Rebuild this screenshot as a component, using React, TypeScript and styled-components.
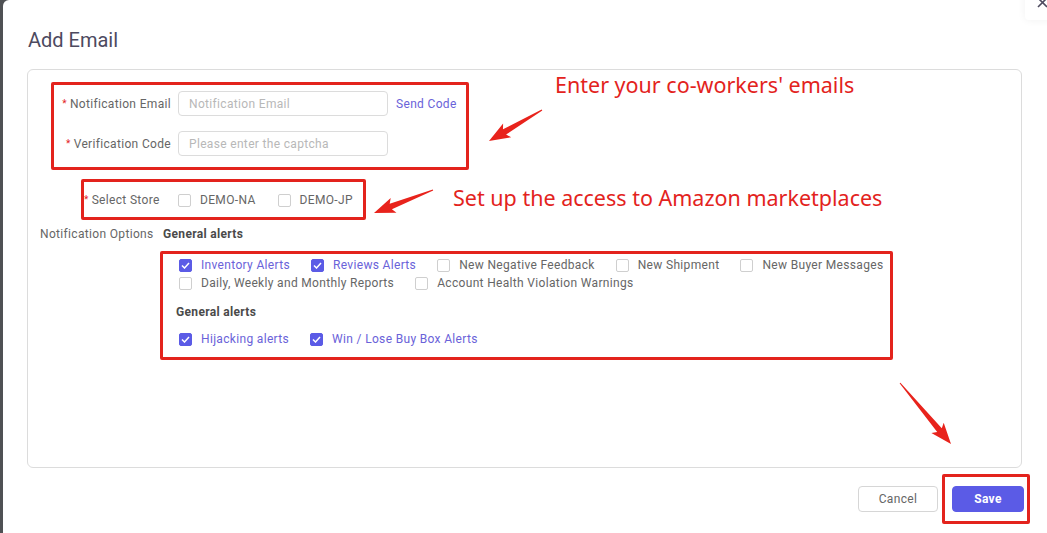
import React, { FC } from "react";
import styled, { createGlobalStyle } from "styled-components";

const GlobalStyle = createGlobalStyle`
  html, body {
    margin: 0;
    padding: 0;
    background: #fff;
  }
  body {
    font-family: Roboto, "Liberation Sans", Arial, sans-serif;
    font-size: 12px;
    letter-spacing: 0.33px;
    color: #666;
  }
`;

const Page = styled.div`
  position: relative;
  display: flex;
  width: 1047px;
  height: 533px;
  overflow: hidden;
  background: #4f5154;
`;

const Backdrop = styled.div`
  width: 3px;
  flex-shrink: 0;
`;

const Modal = styled.div`
  flex: 1;
  background: #fff;
  border-top-left-radius: 6px;
  padding: 28px 25px 0 24px;
  display: flex;
  flex-direction: column;
`;

const Title = styled.h2`
  margin: 0 0 0 1px;
  font-size: 20px;
  line-height: 24px;
  font-weight: 400;
  letter-spacing: 0;
  color: #4d4a5f;
`;

const Body = styled.div`
  margin-top: 17px;
  height: 399px;
  box-sizing: border-box;
  border: 1px solid #dcdcdc;
  border-radius: 6px;
  padding-top: 12px;
`;

const Highlight = styled.div<{ $left?: number; $top?: number; $width?: number; $pad?: string }>`
  box-sizing: border-box;
  border: 3px solid #e3231d;
  border-radius: 2px;
  margin-left: ${(p) => p.$left ?? 0}px;
  margin-top: ${(p) => p.$top ?? 0}px;
  width: ${(p) => (p.$width ? `${p.$width}px` : "auto")};
  padding: ${(p) => p.$pad ?? "0"};
`;

const FormRow = styled.div`
  display: flex;
  align-items: center;
  height: 25px;
  & + & {
    margin-top: 15px;
  }
`;

const Label = styled.label<{ $width: number; $align?: string; $after?: number }>`
  width: ${(p) => p.$width}px;
  flex-shrink: 0;
  text-align: ${(p) => p.$align ?? "right"};
  margin-right: ${(p) => p.$after ?? 0}px;
  color: #666;
  line-height: 18px;
  white-space: nowrap;
`;

const Star = styled.span`
  color: #e3231d;
  font-size: 10px;
  margin-right: 3px;
  vertical-align: 1px;
`;

const Input = styled.input`
  box-sizing: border-box;
  width: 210px;
  height: 25px;
  margin-left: 7px;
  padding: 0 10px;
  border: 1px solid #dcdcdc;
  border-radius: 4px;
  font-family: inherit;
  font-size: 12px;
  letter-spacing: 0.33px;
  color: #555;
  outline: none;
  &::placeholder {
    color: #b8b8b8;
  }
`;

const LinkButton = styled.span`
  margin-left: 8px;
  color: #6a62d9;
`;

const CheckRow = styled.div<{ $width?: number; $top?: number }>`
  display: flex;
  flex-wrap: wrap;
  align-items: center;
  width: ${(p) => (p.$width ? `${p.$width}px` : "auto")};
  margin-top: ${(p) => p.$top ?? 0}px;
`;

const CheckItem = styled.label<{ $gap?: number }>`
  display: inline-flex;
  align-items: center;
  height: 18px;
  margin-right: ${(p) => p.$gap ?? 21}px;
  white-space: nowrap;
`;

const Box = styled.span<{ $checked: boolean }>`
  box-sizing: border-box;
  width: 13px;
  height: 13px;
  border-radius: 2px;
  border: 1px solid ${(p) => (p.$checked ? "#5b5be6" : "#cfcfcf")};
  background: ${(p) => (p.$checked ? "#5b5be6" : "#fff")};
  display: inline-flex;
  align-items: center;
  justify-content: center;
  margin-right: 9px;
`;

const CheckText = styled.span<{ $checked: boolean }>`
  color: ${(p) => (p.$checked ? "#6a62d9" : "#666")};
  line-height: 18px;
`;

const OptionsRow = styled.div`
  display: flex;
  align-items: center;
  height: 18px;
  margin-top: 5px;
  padding-left: 12px;
`;

const SectionTitle = styled.span<{ $indent?: number; $top?: number }>`
  display: block;
  font-weight: 700;
  color: #4a4a4a;
  line-height: 18px;
  margin-left: ${(p) => p.$indent ?? 0}px;
  margin-top: ${(p) => p.$top ?? 0}px;
`;

const Footer = styled.div`
  display: flex;
  justify-content: flex-end;
  align-items: center;
  margin-top: 6px;
  margin-right: -8px;
`;

const Button = styled.button<{ $primary?: boolean }>`
  box-sizing: border-box;
  height: 26px;
  border-radius: 4px;
  font-family: inherit;
  font-size: 12px;
  letter-spacing: 0.33px;
  border: 1px solid ${(p) => (p.$primary ? "#5b5be6" : "#d6d6d6")};
  background: ${(p) => (p.$primary ? "#5b5be6" : "#fff")};
  color: ${(p) => (p.$primary ? "#fff" : "#666")};
  font-weight: ${(p) => (p.$primary ? 700 : 400)};
  width: ${(p) => (p.$primary ? 72 : 80)}px;
  cursor: pointer;
`;

const CloseBtn = styled.div`
  position: absolute;
  top: -12px;
  right: -10px;
  width: 32px;
  height: 32px;
  background: #fff;
  border-radius: 4px;
  box-shadow: 0 0 8px rgba(0, 0, 0, 0.06);
  box-sizing: border-box;
  padding: 9px 0 0 12px;
  color: #4d4a5f;
`;

const Note = styled.div<{ $x: number; $y: number }>`
  position: absolute;
  left: ${(p) => p.$x}px;
  top: ${(p) => p.$y}px;
  font-family: "Noto Sans", "Open Sans", sans-serif;
  font-size: 21.5px;
  line-height: 28px;
  letter-spacing: 0;
  color: #e3231d;
  white-space: nowrap;
`;

const Arrows = styled.svg`
  position: absolute;
  left: 0;
  top: 0;
  pointer-events: none;
`;

const Tick = () => (
  <svg width="9" height="7" viewBox="0 0 9 7">
    <path d="M1 3.5 L3.5 6 L8 1" fill="none" stroke="#fff" strokeWidth="1.5" />
  </svg>
);

const CloseIcon = () => (
  <svg width="11" height="11" viewBox="0 0 11 11">
    <path d="M1 1 L10 10 M10 1 L1 10" stroke="currentColor" strokeWidth="1.6" />
  </svg>
);

interface CheckProps {
  label: string;
  checked?: boolean;
  gap?: number;
}

const Check: FC<CheckProps> = ({ label, checked = false, gap }) => (
  <CheckItem $gap={gap}>
    <Box $checked={checked}>{checked && <Tick />}</Box>
    <CheckText $checked={checked}>{label}</CheckText>
  </CheckItem>
);

// tapered arrow from tail to tip
const arrow = (x1: number, y1: number, x2: number, y2: number) => {
  const dx = x2 - x1;
  const dy = y2 - y1;
  const len = Math.hypot(dx, dy);
  const ux = dx / len;
  const uy = dy / len;
  const nx = -uy;
  const ny = ux;
  const headLen = 18;
  const bx = x2 - ux * headLen;
  const by = y2 - uy * headLen;
  const pts = [
    [x1 + nx * 0.5, y1 + ny * 0.5],
    [bx + nx * 3, by + ny * 3],
    [bx - ux * 3 + nx * 8, by - uy * 3 + ny * 8],
    [x2, y2],
    [bx - ux * 3 - nx * 8, by - uy * 3 - ny * 8],
    [bx - nx * 3, by - ny * 3],
    [x1 - nx * 0.5, y1 - ny * 0.5],
  ];
  return pts.map((p) => `${p[0].toFixed(1)},${p[1].toFixed(1)}`).join(" ");
};

const App: FC = () => {
  return (
    <>
      <GlobalStyle />
      <Page>
        <Backdrop />
        <Modal>
          <Title>Add Email</Title>
          <Body>
            <Highlight $left={23} $width={418} $pad="6px 0 11px 0">
              <FormRow>
                <Label $width={117}>
                  <Star>*</Star>Notification Email
                </Label>
                <Input placeholder="Notification Email" />
                <LinkButton>Send Code</LinkButton>
              </FormRow>
              <FormRow>
                <Label $width={117}>
                  <Star>*</Star>Verification Code
                </Label>
                <Input placeholder="Please enter the captcha" />
              </FormRow>
            </Highlight>

            <Highlight $left={53} $top={9} $width={285} $pad="9px 0 8px 0">
              <CheckRow>
                <Label $width={74} $after={20}>
                  <Star>*</Star>Select Store
                </Label>
                <Check label="DEMO-NA" gap={22} />
                <Check label="DEMO-JP" gap={0} />
              </CheckRow>
            </Highlight>

            <OptionsRow>
              <Label $width={112} $align="left">
                Notification Options
              </Label>
              <SectionTitle $indent={11}>General alerts</SectionTitle>
            </OptionsRow>

            <Highlight $left={132} $top={8} $width={733} $pad="2px 0 9px 16px">
              <CheckRow $width={711}>
                <Check label="Inventory Alerts" checked />
                <Check label="Reviews Alerts" checked />
                <Check label="New Negative Feedback" />
                <Check label="New Shipment" />
                <Check label="New Buyer Messages" gap={0} />
                <Check label="Daily, Weekly and Monthly Reports" />
                <Check label="Account Health Violation Warnings" gap={0} />
              </CheckRow>
              <SectionTitle $indent={-3} $top={11}>
                General alerts
              </SectionTitle>
              <CheckRow $top={9}>
                <Check label="Hijacking alerts" checked />
                <Check label="Win / Lose Buy Box Alerts" checked gap={0} />
              </CheckRow>
            </Highlight>
          </Body>

          <Footer>
            <Button>Cancel</Button>
            <Highlight $pad="9px 3px 9px 7px" style={{ marginLeft: 4 }}>
              <Button $primary>Save</Button>
            </Highlight>
          </Footer>
        </Modal>

        <CloseBtn aria-label="Close">
          <CloseIcon />
        </CloseBtn>

        <Note $x={555} $y={71}>Enter your co-workers' emails</Note>
        <Note $x={453} $y={184}>Set up the access to Amazon marketplaces</Note>

        <Arrows width={1047} height={533}>
          <polygon points={arrow(542, 110, 489, 141)} fill="#e8231c" />
          <polygon points={arrow(433, 190, 374, 213)} fill="#e8231c" />
          <polygon points={arrow(900, 383, 951, 444)} fill="#e8231c" />
        </Arrows>
      </Page>
    </>
  );
};

export default App;
